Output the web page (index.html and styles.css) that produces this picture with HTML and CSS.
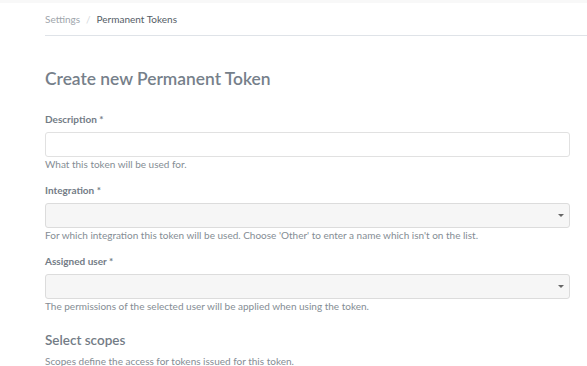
FILE: index.html
```html
<!DOCTYPE html>
<html lang="en">
<head>
  <meta charset="UTF-8">
  <meta name="viewport" content="width=device-width, initial-scale=1.0">
  <title>Create new Permanent Token</title>
  <link rel="stylesheet" href="styles.css">
</head>
<body>
  <div class="topstrip"></div>
  <div class="page">
    <nav class="breadcrumb">
      <span class="crumb">Settings</span>
      <span class="sep">/</span>
      <span class="crumb current">Permanent Tokens</span>
    </nav>

    <h1>Create new Permanent Token</h1>

    <form class="token-form">
      <div class="form-group">
        <label for="description">Description *</label>
        <input type="text" id="description">
        <p class="help">What this token will be used for.</p>
      </div>
      <div class="form-group">
        <label for="integration">Integration *</label>
        <div class="select">
          <select id="integration"></select>
        </div>
        <p class="help">For which integration this token will be used. Choose 'Other' to enter a name which isn't on the list.</p>
      </div>
      <div class="form-group">
        <label for="user">Assigned user *</label>
        <div class="select">
          <select id="user"></select>
        </div>
        <p class="help">The permissions of the selected user will be applied when using the token.</p>
      </div>

      <h2>Select scopes</h2>
      <p class="help">Scopes define the access for tokens issued for this token.</p>
    </form>
  </div>
</body>
</html>
```

FILE: styles.css
```css
body {
  margin: 0;
  font-family: Lato, 'Noto Sans', sans-serif;
  background-color: white;
  color: #6b7580;
}
.topstrip {
  height: 3px;
  background-color: #f8f8f8;
}
.page {
  padding-left: 45px;
}
.breadcrumb {
  display: flex;
  align-items: center;
  gap: 6px;
  height: 32px;
  font-size: 10px;
  border-bottom: 1px solid #dfe3e8;
}
.crumb {
  color: #a0a6ac;
}
.crumb.current {
  color: #555d66;
}
.sep {
  color: #d4d8dc;
}
h1 {
  font-size: 17.4px;
  font-weight: 600;
  color: #76808a;
  margin: 33px 0 0;
  line-height: 20px;
}
.token-form {
  width: 525px;
  margin-top: 24px;
}
.form-group {
  display: flex;
  flex-direction: column;
  margin-bottom: 13px;
}
label {
  font-size: 10px;
  font-weight: bold;
  color: #737c86;
  line-height: 13px;
  margin-bottom: 6px;
}
input, select {
  box-sizing: border-box;
  width: 100%;
  height: 25px;
  border: 1px solid #e1e1e1;
  border-radius: 3px;
  margin: 0;
  font-family: inherit;
}
input {
  background-color: white;
}
.select {
  position: relative;
}
select {
  appearance: none;
  background-color: #f6f6f6;
  border-color: #dcdcdc;
}
.select::after {
  content: '';
  position: absolute;
  right: 6px;
  top: 11px;
  border-left: 3px solid transparent;
  border-right: 3px solid transparent;
  border-top: 3px solid #666;
}
.help {
  font-size: 10px;
  color: #858d94;
  margin: 1px 0 0;
  line-height: 13px;
}
h2 {
  font-size: 13.5px;
  font-weight: 600;
  color: #737c86;
  line-height: 16px;
  margin: 19px 0 7px;
}
```
